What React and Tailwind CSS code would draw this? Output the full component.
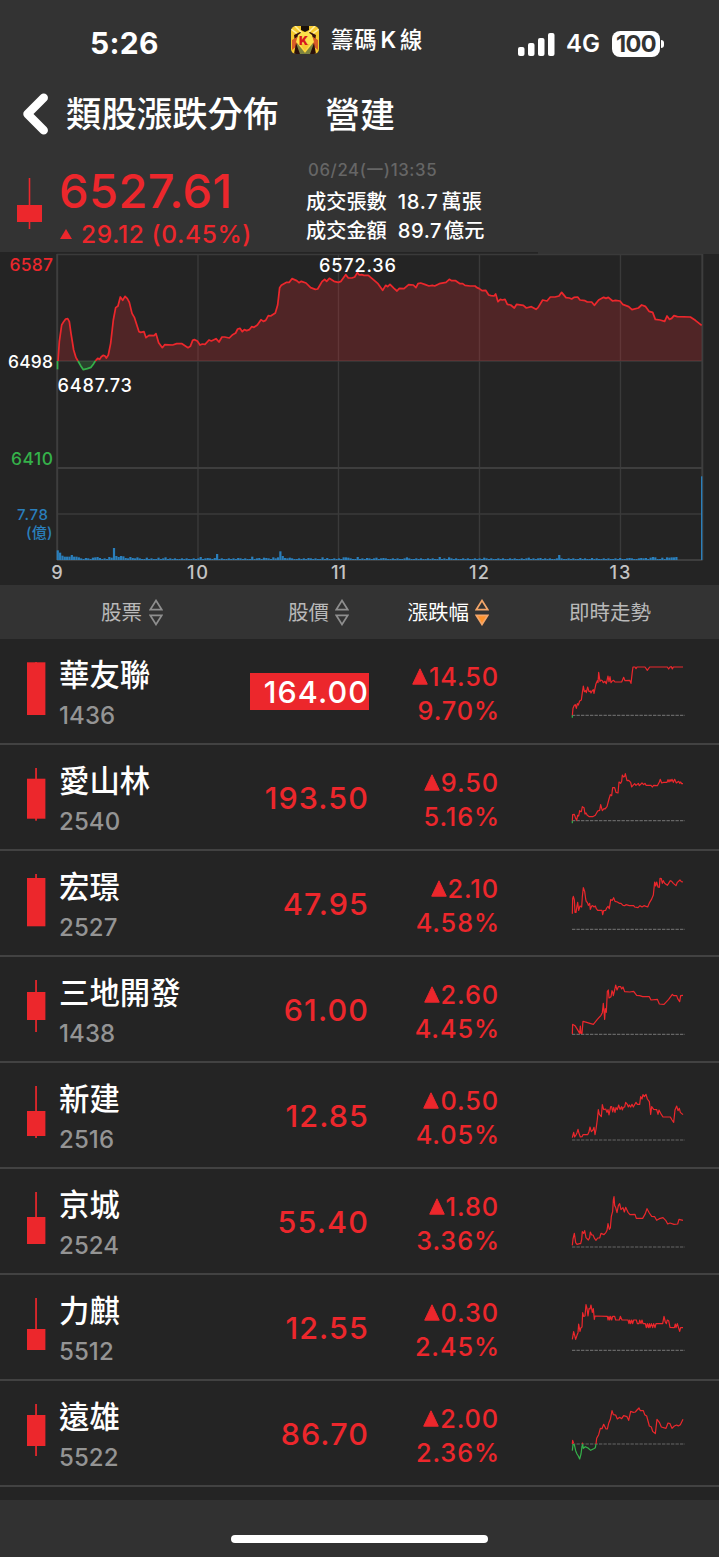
import clsx from 'clsx';

const RED = '#ec272c';
const GREEN = '#35b14a';

// Chart samples, three units per pixel
const shift = (points, dx) => points.map(([x, y]) => [x + dx, y]);
const toPoints = (points) => points.map((p) => p.join(',')).join(' ');

const earlyRed = [[174, 348], [178, 290], [185, 240], [191, 230], [197, 222], [203, 221], [208, 230], [213, 265], [221, 315], [228, 338], [234, 348]];
const earlyGreen = [[234, 348], [242, 362], [250, 374], [262, 371], [273, 367], [281, 356], [286, 348]];
const session = [
  [286, 348], [293, 340], [299, 343], [304, 335], [310, 331], [315, 333], [319, 339], [325, 330], [332, 295], [340, 225], [347, 188], [354, 183], [361, 156], [368, 166], [375, 154], [382, 161], [388, 172], [396, 205], [403, 217], [417, 260], [422, 262], [432, 260], [438, 278], [447, 271], [462, 272], [468, 266], [476, 293], [487, 308], [494, 299], [518, 300], [530, 296], [546, 296], [564, 308], [571, 304], [578, 286], [583, 284], [592, 288], [600, 300], [607, 297], [615, 298], [627, 285], [634, 288], [648, 281], [657, 291], [666, 276], [674, 276], [688, 279], [698, 269], [707, 264],
  ...shift([[23, 252], [30, 250], [37, 260], [43, 254], [50, 257], [58, 254], [65, 245], [72, 247], [82, 240], [93, 224], [100, 229], [107, 226], [115, 212], [122, 213], [136, 204], [143, 180], [149, 128], [154, 121], [170, 112], [178, 112], [186, 101], [193, 104], [200, 107], [207, 113], [214, 109], [228, 114], [242, 128], [256, 133], [263, 132], [276, 110], [284, 103], [290, 109], [298, 100], [312, 109], [325, 112], [333, 109], [347, 89], [355, 99], [366, 99], [374, 96], [382, 83], [388, 90], [395, 89], [402, 91], [415, 91], [430, 104], [444, 116], [458, 136], [467, 121], [473, 125], [480, 118], [492, 130], [501, 138], [508, 130], [522, 131], [536, 119], [550, 120], [558, 128], [564, 116], [572, 114], [586, 119], [597, 123], [607, 121], [614, 123], [628, 116], [648, 112], [658, 103], [665, 107], [677, 107], [690, 116], [698, 116], [705, 121]], 690),
  ...shift([[0, 123], [15, 123], [21, 128], [28, 131], [36, 137], [47, 136], [56, 150], [63, 152], [72, 153], [77, 147], [84, 170], [91, 163], [97, 165], [105, 163], [112, 178], [122, 180], [133, 189], [140, 178], [160, 181], [169, 189], [184, 185], [198, 193], [204, 188], [218, 165], [231, 168], [241, 156], [255, 156], [267, 153], [275, 142], [288, 158], [298, 159], [305, 162], [312, 157], [323, 156], [330, 165], [345, 167], [352, 171], [365, 171], [373, 181], [386, 165], [401, 157], [408, 160], [415, 157], [428, 168], [436, 166], [450, 168], [458, 178], [476, 185], [486, 194], [505, 189], [515, 180], [526, 184], [537, 199], [548, 202], [556, 223], [570, 225], [584, 229], [591, 213], [598, 223], [605, 220], [612, 212], [622, 215], [661, 216], [676, 226], [695, 241]], 1410),
];

const volumeSpikes = {
  0: 29, 1: 22, 2: 13, 3: 10, 4: 10, 5: 10, 6: 15, 7: 10, 8: 10, 9: 8, 12: 6, 15: 7, 16: 8, 17: 9, 18: 6, 22: 9, 23: 7, 24: 36, 25: 12, 26: 9, 27: 12, 28: 11,
  29: 6, 31: 9, 32: 6, 34: 8, 38: 7, 43: 7, 46: 8, 61: 9, 64: 6, 67: 6, 68: 18, 77: 6, 83: 10, 86: 6, 88: 7, 89: 6, 92: 8, 94: 8, 95: 26, 96: 12, 97: 6, 99: 7,
  107: 6, 113: 8, 115: 6, 122: 8, 123: 8, 124: 7, 128: 9, 132: 6, 136: 7, 139: 6, 149: 8, 163: 9, 167: 8, 182: 7, 201: 7, 206: 6, 214: 15, 223: 6, 228: 6, 240: 6, 244: 6, 249: 6, 251: 6, 253: 7, 254: 9, 255: 8, 258: 7, 260: 8, 261: 7, 262: 8, 263: 8, 264: 9,
};
const volumes = Array.from({ length: 265 }, (_, i) => volumeSpikes[i] ?? 3 + ((i * 7) % 5 < 2 ? 2 : 0));

const stocks = [
  {
    name: '華友聯', code: '1436', price: '164.00', change: '14.50', percent: '9.70%', limitUp: true,
    candle: { wick: [23, 76], body: [23.3, 76] },
    origin: [540, -3], base: 226,
    green: '577,226 577,233',
    red: '577,226 579,205 583,196 586,194 589,205 592,191 595,195 599,183 604,180 607,158 610,138 613,155 617,152 619,158 623,141 627,155 631,153 633,159 637,152 640,149 642,160 645,145 648,131 652,122 654,128 656,97 660,124 663,120 667,122 670,128 675,124 679,131 684,108 687,125 690,110 693,128 697,123 701,121 705,126 725,126 731,112 735,122 749,121 753,130 757,95 759,81 765,81 768,86 771,81 795,81 802,91 809,81 862,81 866,87 870,81 874,80 877,87 880,81 909,81',
  },
  {
    name: '愛山林', code: '2540', price: '193.50', change: '9.50', percent: '5.16%',
    candle: { wick: [23, 75.7], body: [33.7, 73.7] },
    origin: [540, 315], base: 542,
    green: '577,542 577,550',
    red: '577,542 578,524 583,523 587,535 590,541 593,526 596,528 599,512 602,515 604,515 607,500 612,503 615,522 618,519 622,526 628,530 638,530 646,526 653,513 659,511 662,494 667,512 672,506 675,507 681,500 687,477 691,464 695,467 698,443 704,443 708,457 714,459 717,426 722,430 725,424 727,405 731,411 734,409 736,401 741,422 746,421 749,424 752,427 755,441 759,436 764,431 768,436 775,430 778,437 786,429 791,434 795,430 798,436 813,436 817,441 821,436 832,437 838,426 841,418 845,429 851,427 861,427 864,419 867,426 870,419 873,424 876,418 880,427 884,418 889,429 896,424 899,430 902,426 905,431 909,431',
  },
  {
    name: '宏璟', code: '2527', price: '47.95', change: '2.10', percent: '4.58%',
    candle: { wick: [23, 75], body: [27, 75.3] },
    origin: [0, 3], base: 238,
    red: '37,191 38,145 40,139 43,150 45,187 48,187 51,168 53,157 56,181 60,168 65,171 67,140 70,113 74,124 77,147 79,155 82,157 85,166 89,160 91,178 95,168 98,167 102,171 106,168 109,176 113,181 120,181 126,181 128,194 131,182 137,181 140,174 144,169 148,176 152,149 157,151 161,143 165,154 172,156 178,160 183,160 189,166 194,167 198,164 208,167 221,167 224,171 234,173 240,167 246,171 252,167 263,171 269,157 274,149 280,135 284,96 287,108 290,96 294,111 298,112 300,85 304,86 307,100 310,92 314,100 322,106 331,92 335,94 340,100 348,107 352,97 360,90 364,95 369,96',
  },
  {
    name: '三地開發', code: '1438', price: '61.00', change: '2.60', percent: '4.45%',
    candle: { wick: [23, 75], body: [35, 63] },
    origin: [0, 321], base: 553,
    red: '37,552 38,523 45,527 52,538 59,550 61,528 63,550 66,551 69,514 80,517 100,523 112,508 123,496 127,488 130,460 134,508 136,476 139,487 142,424 145,420 147,444 153,440 156,422 158,426 160,437 164,420 167,405 171,420 175,410 182,410 185,417 189,411 194,425 209,426 221,424 230,436 239,437 248,440 268,440 273,450 292,448 298,462 312,463 326,448 337,433 341,437 350,437 353,446 359,455 362,437 369,436',
  },
  {
    name: '新建', code: '2516', price: '12.85', change: '0.50', percent: '4.05%',
    candle: { wick: [23, 75], body: [48, 73] },
    origin: [0, 639], base: 870,
    red: '37,863 41,847 44,861 48,855 51,848 54,838 57,850 61,861 66,860 69,854 83,854 87,845 90,831 94,845 99,840 102,832 105,854 108,838 112,808 115,779 118,793 124,800 127,764 131,779 137,777 141,787 144,779 147,795 152,770 155,770 158,786 161,772 165,787 168,773 172,779 176,765 180,778 185,770 187,780 190,772 194,771 197,757 202,763 205,771 208,765 212,771 216,763 220,771 225,762 228,757 232,763 239,763 242,740 246,747 249,734 253,740 258,733 262,747 268,755 272,793 275,770 281,778 290,779 294,793 297,780 302,790 309,801 331,801 336,810 341,817 345,780 350,768 354,782 358,775 361,787 369,794',
  },
  {
    name: '京城', code: '2524', price: '55.40', change: '1.80', percent: '3.36%',
    candle: { wick: [23, 75], body: [48, 75] },
    origin: [0, -3], base: 231,
    red: '37,226 39,207 43,190 47,218 51,223 59,221 62,221 65,208 67,185 71,190 74,182 78,203 85,210 89,203 91,186 95,195 99,195 104,206 108,211 113,204 119,204 123,190 132,194 138,187 141,181 144,161 148,178 151,174 154,139 158,124 160,90 162,80 164,107 167,112 171,128 175,107 179,101 183,119 189,113 193,126 197,112 204,127 210,134 225,133 229,145 248,145 256,131 261,116 268,129 275,139 284,140 290,151 298,146 309,143 317,151 323,162 330,159 342,163 353,162 357,148 369,151',
  },
  {
    name: '力麒', code: '5512', price: '12.55', change: '0.30', percent: '2.45%',
    candle: { wick: [23, 75], body: [54, 75] },
    origin: [0, 315], base: 541,
    red: '37,508 41,485 44,496 47,508 51,496 54,488 56,462 60,484 63,473 66,471 68,428 71,439 75,438 78,404 81,416 84,438 87,416 90,417 93,405 97,427 100,416 103,448 105,438 142,439 144,450 147,439 149,450 152,439 155,450 158,439 164,439 167,450 178,450 181,439 186,450 204,450 207,461 209,450 212,461 215,450 218,461 221,450 229,450 232,461 237,461 239,450 243,461 246,450 249,461 256,461 259,473 262,461 265,473 268,461 270,473 274,461 278,473 281,461 285,473 288,461 308,461 312,439 316,456 319,461 322,450 326,452 330,472 343,473 346,462 348,473 352,461 355,471 359,484 362,473 369,473',
  },
  {
    name: '遠雄', code: '5522', price: '86.70', change: '2.00', percent: '2.36%',
    candle: { wick: [23, 75], body: [34, 65] },
    origin: [0, 633], base: 822,
    green: '37,842 39,824 43,824 47,842 51,852 55,858 59,867 63,852 66,829 68,823 70,835 76,830 84,834 92,841 101,836 106,833 108,822',
    red: '37,822 38,811 41,820 M67,818 68,822 M108,822 110,805 116,794 121,775 126,776 131,763 138,777 142,777 146,760 151,748 156,722 160,734 167,735 172,747 179,742 185,746 191,737 201,740 206,751 212,724 220,727 226,726 231,720 237,714 241,722 250,722 254,734 260,738 264,753 268,768 274,771 278,784 286,791 291,748 298,757 304,771 318,775 324,759 330,761 336,775 343,768 350,765 355,768 361,764 369,748',
  },
];

function StatusBar() {
  return (
    <div className="flex h-[72px] items-start text-white">
      <div className="w-[291px] pl-[90px] pt-[26px] text-[30px] leading-[34px] font-bold tracking-[0.3px]">5:26</div>
      <div className="flex w-[227px] pt-[26px]">
        <svg width="28" height="28" viewBox="0 0 28 28" className="shrink-0">
          <clipPath id="app"><rect width="28" height="28" rx="5" /></clipPath>
          <g clipPath="url(#app)">
            <rect width="28" height="28" fill="#f5c92e" />
            <path d="M0 3 11 11M4 0 12 8M28 3 17 11M24 0 16 8" stroke="#fff0a0" strokeWidth="1.5" />
            <path d="M10 0h8v4l-4 2-4-2z" fill="#191008" />
            <path d="M3 9 9 6l3 2-5 3-3 5zM25 9l-6-3-3 2 5 3 3 5z" fill="#35110b" />
            <path d="M1 14l5-3v9l-5 4zM27 14l-5-3v9l5 4z" fill="#d85b27" />
            <path d="M7 9l4-3h6l4 3 2 7-9 10-9-10z" fill="#fbe04a" />
            <path d="M6 17l8 10 8-10v11H6z" fill="#7d8340" />
            <path d="M5 17l4 11H3zM23 17l-4 11h6z" fill="#2a100c" />
            <path d="M9 18l5 7 5-7z" fill="#f8c632" />
            <text x="12.500" y="18.500" textAnchor="middle" fill="#d8181c" fontSize="12" fontWeight="900">K</text>
          </g>
        </svg>
        <span className="ml-3 text-[22.300px] leading-7 font-medium tracking-[0.9px]">籌碼<span className="mx-[3px] font-semibold">K</span>線</span>
      </div>
      <div className="flex items-center pt-[27px]">
        <svg width="38" height="30" viewBox="518 27 38 30" fill="#fff">
          <rect x="518" y="45" width="6.5" height="9" rx="2" />
          <rect x="528" y="41" width="6.5" height="13" rx="2" />
          <rect x="538" y="36" width="6.5" height="18" rx="2" />
          <rect x="548" y="31" width="6.5" height="23" rx="2" />
        </svg>
        <span className="ml-[10px] w-[37px] text-[24px] leading-[34px] font-semibold">4G</span>
        <span className="ml-[9px] flex h-[26px] w-12 items-center justify-center rounded-lg bg-white text-[23.5px] font-bold tracking-[-0.6px] text-[#333333]">100</span>
        <span className="ml-px h-2 w-[3px] rounded-r-full bg-white" />
      </div>
    </div>
  );
}

function TitleBar() {
  return (
    <div className="flex h-[88px] items-center text-white">
      <svg width="66" height="88" viewBox="0 72 66 88" fill="none" stroke="#fff" strokeWidth="8.5" strokeLinecap="round" strokeLinejoin="round">
        <path d="M43.7 97.7 27.500 114l16.2 16.3" />
      </svg>
      <h1 className="w-[259px] pb-[3px] text-[35.4px] leading-[50px] font-medium">類股漲跌分佈</h1>
      <h2 className="pb-[3px] text-[35px] leading-[50px] font-medium">營建</h2>
    </div>
  );
}

function Summary() {
  return (
    <div className="flex h-[92px]">
      <svg width="59" height="92" viewBox="0 160 59 92" fill={RED}>
        <rect x="28.7" y="178" width="1.6" height="51" />
        <rect x="17" y="205" width="25" height="17" />
      </svg>
      <div className="w-[247px] text-[#ec272c]">
        <div className="mt-1 h-[54px] text-[47px] leading-[54px] font-medium tracking-[0.4px]">6527.61</div>
        <div className="flex h-8 items-center text-[24.5px] leading-8 font-medium tracking-[0.6px]">
          <svg width="13" height="10" viewBox="-1 0 13 10" className="mr-[9px]"><path d="M6 0 12 10H0z" fill={RED} /></svg>
          29.12 (0.45%)
        </div>
      </div>
      <div className="font-medium text-white">
        <div className="pl-[2px] text-[16.8px] leading-5 tracking-[0.6px] text-[#666666]">06/24(一)13:35</div>
        <div className="mt-[7px] text-[20.2px] leading-[29px]">成交張數<span className="ml-[11px] tracking-[0.7px]">18.7</span><span className="ml-[3px]">萬張</span></div>
        <div className="text-[20.2px] leading-[29px]">成交金額<span className="ml-[11px] tracking-[0.5px]">89.7</span><span className="ml-[2px]">億元</span></div>
      </div>
    </div>
  );
}

function IndexChart() {
  const all = [...earlyRed, ...session];
  return (
    <svg width="719" height="333" viewBox="0 252 719 333" className="block" fontWeight="500">
      <rect x="538" y="252" width="181" height="2" fill="#333333" />
      <g stroke="#3a3a3a" strokeWidth="1.4">
        <path d="M57 254.5H702.5M57 361H702.5M57 514H702.5" />
        <path d="M198 254V560M338.5 254V560M479.5 254V560M620.5 254V560" />
      </g>
      <path d="M57.2 254V560M702.3 254V560M57 468H702.5M57 560H702.5" stroke="#3e3e3e" strokeWidth="2" />
      <g transform="translate(0 245) scale(.33333)" fill="none" strokeWidth="5.2" strokeLinejoin="round">
        <polygon points={`${toPoints(all)} 2105,348 174,348`} fill={RED} fillOpacity="0.22" />
        <polygon points={toPoints(earlyGreen)} fill={GREEN} fillOpacity="0.22" />
        <polyline points={toPoints(earlyRed)} stroke={RED} />
        <polyline points={toPoints(session)} stroke={RED} />
        <polyline points={toPoints(earlyGreen)} stroke={GREEN} />
        <path d="M172.500 373V348" stroke={GREEN} />
        {volumes.map((h, i) => (
          <rect key={i} x={170 + i * 7.03} y={945 - h} width="6.6" height={h} fill="#2a7fbc" />
        ))}
        <rect x="2103" y="694" width="4" height="251" fill="#2a7fbc" />
      </g>
      <g fontSize="17.400" textAnchor="end">
        <text x="53" y="270.500" fill={RED} textLength="43.500">6587</text>
        <text x="53" y="367.500" fill="#fff" textLength="45">6498</text>
        <text x="53" y="464.500" fill={GREEN} textLength="42">6410</text>
        <text x="48" y="519.500" fontSize="15" fill="#2a7fbc" textLength="31">7.78</text>
        <text x="52.500" y="538" fontSize="15" fill="#2a7fbc" textLength="26.500">(億)</text>
      </g>
      <g fontSize="18.200" fill="#fff">
        <text x="57.500" y="391.500" textLength="74.500">6487.73</text>
        <text x="319" y="271.500" textLength="77">6572.36</text>
      </g>
      <g fontSize="18.200" fill="#c4c4c4" textAnchor="middle">
        <text x="57" y="578.500">9</text>
        <text x="197.500" y="578.500" textLength="21">10</text>
        <text x="338.500" y="578.500">11</text>
        <text x="479" y="578.500" textLength="20">12</text>
        <text x="620" y="578.500" textLength="21">13</text>
      </g>
    </svg>
  );
}

function SortIcon({ active }) {
  const color = active ? '#f3a66a' : '#8e8e8e';
  return (
    <svg width="14" height="27" viewBox="0 0 14 27" fill="none" stroke={color} strokeWidth="1.7">
      <path d="M7 1.500 12.800 10.700H1.200z" />
      <path d="M1.200 16.300H12.800L7 25.500z" fill={active ? '#ff922b' : 'none'} />
    </svg>
  );
}

function TableHead() {
  return (
    <div className="grid h-[54px] grid-cols-[162px_187px_140px_1fr] items-center bg-[#333333] text-[20.5px] text-[#b9b9b9]">
      <div className="-mr-px flex items-center justify-end gap-[7px]"><span className="pt-[2px]">股票</span><SortIcon /></div>
      <div className="flex items-center justify-end gap-[6px]"><span className="pt-[2px]">股價</span><SortIcon /></div>
      <div className="flex items-center justify-end gap-[6px] text-white"><span className="pt-[2px]">漲跌幅</span><SortIcon active /></div>
      <div className="pt-[2px] pl-[80px]">即時走勢</div>
    </div>
  );
}

function StockRow({ stock }) {
  const { wick, body } = stock.candle;
  const [left, top] = stock.origin;
  return (
    <div className="flex h-[106px] border-b-2 border-[#424242]">
      <svg width="59" height="104" fill={RED} className="shrink-0">
        <rect x="35.200" y={wick[0]} width="1.700" height={wick[1] - wick[0]} />
        <rect x="27" y={body[0]} width="18.400" height={body[1] - body[0]} />
      </svg>
      <div className="w-[191px] pt-[14px]">
        <div className="text-[30.400px] leading-[44px] font-medium text-white">{stock.name}</div>
        <div className="mt-[4px] text-[24px] leading-[30px] font-medium tracking-[0.1px] text-[#949494]">{stock.code}</div>
      </div>
      <div className="flex w-[119px] items-center pt-px">
        <div className={clsx('h-[37px] w-full text-right text-[30.5px] leading-[37px] font-medium tracking-[1.1px]', stock.limitUp ? 'bg-[#ec272c] text-white' : 'text-[#ec272c]')}>
          {stock.price}
        </div>
      </div>
      <div className="w-[130px] pt-[21px] text-right text-[25.300px] font-medium tracking-[0.9px] text-[#ec272c]">
        <div className="flex items-center justify-end leading-[34px]">
          <svg width="16" height="17" viewBox="0 0 16 17" className="-mt-px"><path d="M8 .8 15.300 16.200H.7z" fill={RED} stroke={RED} strokeLinejoin="round" /></svg>
          <span className="ml-px">{stock.change}</span>
        </div>
        <div className="-mr-px leading-[34px]">{stock.percent}</div>
      </div>
      <svg width="140" height="104" viewBox={`${left} ${top} 420 312`} className="ml-[61px]" fill="none" strokeWidth="3.600" strokeLinejoin="round">
        <line x1={left + 36} x2={left + 375} y1={stock.base} y2={stock.base} stroke="#666666" strokeWidth="3.400" strokeDasharray="10 3.500" />
        <path d={`M${stock.red}`} stroke={RED} />
        {stock.green && <path d={`M${stock.green}`} stroke={GREEN} />}
      </svg>
    </div>
  );
}

export default function App() {
  return (
    <div className="flex h-[1557px] w-[719px] flex-col overflow-hidden bg-[#242424] font-['Inter','Noto_Sans_CJK_TC',sans-serif]">
      <header className="h-[252px] bg-[#333333]">
        <StatusBar />
        <TitleBar />
        <Summary />
      </header>
      <IndexChart />
      <TableHead />
      <main className="h-[861px]">
        {stocks.map((stock) => <StockRow key={stock.code} stock={stock} />)}
      </main>
      <footer className="flex flex-1 justify-center bg-[#313131] pt-[35px]">
        <div className="h-2 w-[257px] rounded-full bg-white" />
      </footer>
    </div>
  );
}
